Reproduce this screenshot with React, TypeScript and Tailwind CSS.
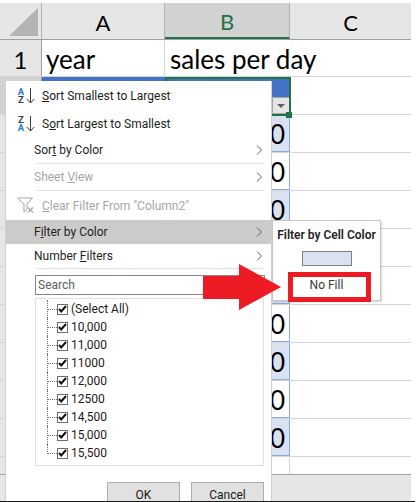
import React from 'react';

const uiFont = "font-['Roboto','Open_Sans',sans-serif]";
const cellFont = "font-['Lato','Open_Sans',sans-serif]";

const tableRows = [
  { id: 3, fill: true, value: '0' },
  { id: 4, fill: false, value: '0' },
  { id: 5, fill: true, value: '0' },
  { id: 6, fill: false, value: '' },
  { id: 7, fill: true, value: '' },
  { id: 8, fill: false, value: '0' },
  { id: 9, fill: true, value: '0' },
  { id: 10, fill: false, value: '0' },
  { id: 11, fill: true, value: '0' },
];

const listValues = ['(Select All)', '10,000', '11,000', '11000', '12,000', '12500', '14,500', '15,000', '15,500'];

const Chevron = () => (
  <svg width="7" height="10" viewBox="0 0 7 10" className="absolute right-[8px] top-1/2 -translate-y-1/2" fill="none" stroke="#605e5c" strokeWidth="1">
    <path d="M1 .5 5.5 5 1 9.5" />
  </svg>
);

const SortIcon = ({ top, bottom }: { top: string; bottom: string }) => (
  <div className="absolute left-[11px] top-1/2 -translate-y-1/2 flex items-center gap-[1px]">
    <div className={`flex flex-col w-[8px] text-[9.5px] leading-[8px] font-bold text-center ${uiFont}`}>
      <span className={top === 'A' ? 'text-[#2b7cd3]' : 'text-[#3b3a39]'}>{top}</span>
      <span className={bottom === 'A' ? 'text-[#2b7cd3]' : 'text-[#3b3a39]'}>{bottom}</span>
    </div>
    <svg width="9" height="16" viewBox="0 0 9 16" fill="none" stroke="#3b3a39" strokeWidth="1">
      <path d="M4.5 0v15M.8 11l3.7 4 3.7-4" />
    </svg>
  </div>
);

const FunnelIcon = () => (
  <svg width="18" height="17" viewBox="0 0 18 17" className="absolute left-[11px] top-[5px]" fill="none">
    <path d="M.5 1h15L10 7v5.5L7 15V7z" stroke="#a6a6a6" strokeWidth="1" />
    <path d="M11 10.5l5 5M16 10.5l-5 5" stroke="#a6a6a6" strokeWidth="1.2" />
  </svg>
);

const MenuItem = ({
  children,
  className = '',
  disabled = false,
}: {
  children: React.ReactNode;
  className?: string;
  disabled?: boolean;
}) => (
  <div className={`relative shrink-0 flex items-center text-[12px] whitespace-nowrap ${disabled ? 'text-[#a6a6a6]' : 'text-[#201f1e]'} ${className}`}>
    {children}
  </div>
);

const Separator = () => <div className="h-px shrink-0 ml-[31px] mr-[6px] bg-[#e1dfdd]" />;

const ListRow = ({ label, last }: { label: string; last: boolean }) => (
  <div className="relative flex items-center h-[18px] pl-[12px]">
    <div className={`absolute left-[11px] top-0 w-0 border-l border-dotted border-[#7a6a5a] ${last ? 'h-[10px]' : 'h-[18px]'}`} />
    <div className="w-[9px] h-0 border-t border-dotted border-[#7a6a5a]" />
    <div className="flex items-center justify-center w-[11px] h-[11px] border border-[#6e6e6e] bg-white shrink-0">
      <svg width="9" height="8" viewBox="0 0 9 8" fill="none" stroke="#111" strokeWidth="2">
        <path d="M1 4l2.2 2.4L8 1" />
      </svg>
    </div>
    <span className="ml-[3px] text-[12px] text-[#1b1a19]">{label}</span>
  </div>
);

const FilterMenu = () => (
  <div className={`absolute left-[5px] top-[81px] w-[267px] h-[420px] bg-white border-x border-[#d0d0d0] overflow-hidden flex flex-col ${uiFont}`}>
    <MenuItem className="h-[29px] pl-[36px]">
      <SortIcon top="A" bottom="Z" />
      <span><u>S</u>ort Smallest to Largest</span>
    </MenuItem>
    <MenuItem className="h-[28px] pl-[36px]">
      <SortIcon top="Z" bottom="A" />
      <span>S<u>o</u>rt Largest to Smallest</span>
    </MenuItem>
    <MenuItem className="h-[24px] pl-[28px]">
      <span>Sor<u>t</u> by Color</span>
      <Chevron />
    </MenuItem>
    <div className="h-[3px] shrink-0 flex flex-col justify-center"><Separator /></div>
    <MenuItem disabled className="h-[24px] pl-[28px]">
      <span>Sheet <u>V</u>iew</span>
      <Chevron />
    </MenuItem>
    <div className="h-[3px] shrink-0 flex flex-col justify-center"><Separator /></div>
    <MenuItem disabled className="h-[28px] pl-[36px]">
      <FunnelIcon />
      <span><u>C</u>lear Filter From "Column2"</span>
    </MenuItem>
    <MenuItem className="h-[24px] pl-[28px] bg-[#cdcbc9]">
      <span>F<u>i</u>lter by Color</span>
      <Chevron />
    </MenuItem>
    <MenuItem className="h-[24px] pl-[28px]">
      <span>Number <u>F</u>ilters</span>
      <Chevron />
    </MenuItem>
    <Separator />
    <div className="mt-[6px] shrink-0 ml-[29px] mr-[6px] h-[20px] border border-[#8a8886] flex items-center px-[2px] text-[12px] text-[#605e5c]">
      Search
    </div>
    <div className="mt-[3px] shrink-0 ml-[29px] mr-[7px] h-[168px] border border-[#e1dfdd] pt-px">
      {listValues.map((value, i) => (
        <ListRow key={value} label={value} last={i === listValues.length - 1} />
      ))}
    </div>
    <div className="mt-[16px] shrink-0 ml-[101px] flex gap-[11px]">
      <button className="w-[73px] h-[26px] bg-[#e1e1e1] border border-[#adadad] text-[12px] text-[#1b1a19] pb-[1px]">OK</button>
      <button className="w-[73px] h-[26px] bg-[#e1e1e1] border border-[#adadad] text-[12px] text-[#1b1a19] pb-[1px]">Cancel</button>
    </div>
  </div>
);

const ColorSubmenu = () => (
  <div className={`absolute left-[272px] top-[220px] w-[109px] h-[81px] bg-white border border-[#c8c6c4] shadow-[1px_1px_2px_rgba(0,0,0,0.15)] flex flex-col items-center ${uiFont}`}>
    <div className="mt-[6px] h-[17px] text-[12px] leading-[17px] font-semibold text-[#252423] whitespace-nowrap">Filter by Cell Color</div>
    <div className="mt-[7px] w-[50px] h-[15px] bg-[#d9e1f2] border border-[#808080]" />
    <div className="mt-[11px] text-[12px] leading-[17px] text-[#3b3a39]">No Fill</div>
  </div>
);

const Callout = () => (
  <>
    <div className="absolute left-[288px] top-[272px] w-[83px] h-[30px] border-[5px] border-[#ed1c24]" />
    <svg width="78" height="46" viewBox="0 0 78 46" className="absolute left-[203px] top-[264px]">
      <path d="M0 12h36V0l42 23-42 23V35H0z" fill="#ed1c24" />
    </svg>
  </>
);

const ColumnHeader = ({ label, className }: { label: string; className: string }) => (
  <div className={`flex items-center justify-center pt-[3px] ${className}`}>{label}</div>
);

export default function App() {
  return (
    <div className="relative w-[420px] h-[502px] bg-white overflow-hidden">
      <div className={`w-[411px] h-[501px] pt-[3px] flex flex-col ${cellFont} text-[26px] text-black`}>
        {/* Column headers */}
        <div className="flex h-[37px] shrink-0 bg-[#e6e6e6] border-b border-[#9f9f9f] text-[22px]">
          <div className="w-[42px] border-r border-[#b0b0b0] relative">
            <svg width="30" height="28" viewBox="0 0 30 28" className="absolute left-[9px] top-[5px]">
              <path d="M29 0v28H0z" fill="#b4b4b4" />
            </svg>
          </div>
          <ColumnHeader label="A" className="w-[123px] border-r border-[#b0b0b0]" />
          <ColumnHeader label="B" className="w-[125px] bg-[#d2d2d2] text-[#217346] border-b-2 border-[#217346] border-r border-r-[#b0b0b0]" />
          <ColumnHeader label="C" className="flex-1" />
        </div>

        {/* Row 1 */}
        <div className="flex h-[37px] shrink-0 border-b border-[#d4d4d4]">
          <div className="w-[42px] bg-[#e6e6e6] border-r border-[#9f9f9f] flex items-center justify-center text-[24px] pt-[3px]">1</div>
          <div className="w-[123px] pl-[4px] pt-[2px] flex items-center border-r border-[#d4d4d4]">year</div>
          <div className="w-[125px] pl-[5px] pt-[2px] flex items-center whitespace-nowrap">sales per day</div>
          <div className="flex-1" />
        </div>

        {/* Row 2, table header */}
        <div className="flex h-[38px] shrink-0 border-b border-[#d4d4d4]">
          <div className="w-[42px] bg-[#d2d2d2] border-r border-[#9f9f9f]" />
          <div className="w-[123px] bg-[#4472c4]" />
          <div className="w-[125px] bg-[#4472c4] relative">
            <div className="absolute right-0 bottom-0 w-[18px] h-[17px] bg-[#e6e6e6] border border-[#a6a6a6] flex items-center justify-center">
              <div className="w-0 h-0 border-x-[4px] border-x-transparent border-t-[4px] border-t-[#605e5c]" />
            </div>
          </div>
          <div className="flex-1" />
        </div>

        {/* Data rows */}
        {tableRows.map((row) => (
          <div key={row.id} className="flex h-[38px] shrink-0 border-b border-[#d4d4d4]">
            <div className="w-[42px] bg-[#e6e6e6] border-r border-[#9f9f9f]" />
            <div className={`w-[123px] ${row.fill ? 'bg-[#d9e1f2]' : 'bg-white'}`} />
            <div className={`w-[125px] pr-[4px] pt-[2px] flex items-center justify-end border-r border-b border-[#8ea9db] ${row.fill ? 'bg-[#d9e1f2]' : 'bg-white'}`}>{row.value}</div>
            <div className="flex-1" />
          </div>
        ))}

        {/* Blank row */}
        <div className="flex h-[17px] shrink-0">
          <div className="w-[42px] bg-[#e6e6e6] border-r border-[#9f9f9f]" />
          <div className="w-[248px] border-r border-[#d4d4d4]" />
        </div>

        {/* Sheet bar */}
        <div className="flex-1 bg-[#e6e6e6] border-t border-[#9f9f9f]" />
      </div>
      <div className="h-px w-[415px] bg-[#1a1a1a]" />

      {/* Selection frame on B2 */}
      <div className="absolute left-[165px] top-[77px] w-[126px] h-[39px] border-2 border-[#217346]" />
      <div className="absolute left-[286px] top-[112px] w-[6px] h-[6px] bg-[#217346]" />

      <FilterMenu />
      <ColorSubmenu />
      <Callout />
    </div>
  );
}
